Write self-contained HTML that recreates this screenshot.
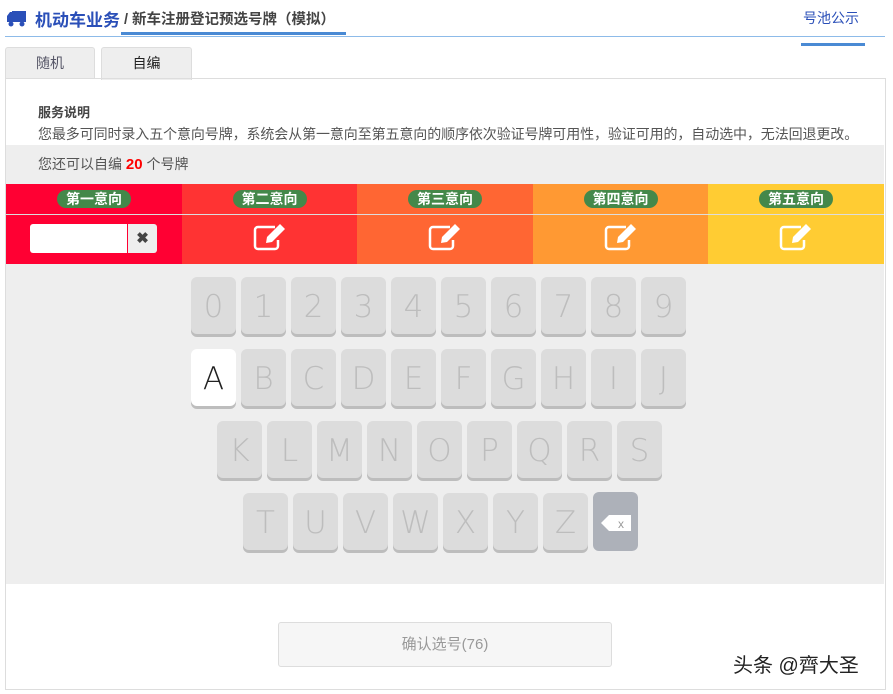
<!DOCTYPE html>
<html><head><meta charset="utf-8"><style>
body{margin:0;width:893px;height:694px;background:#fff;font-family:"Liberation Sans","Noto Sans CJK SC",sans-serif;position:relative;overflow:hidden}
.a{position:absolute}
.k{position:absolute;width:45px;height:57px;background:#dcdcdc;border-radius:6px;box-shadow:0 3px 0 #bdbdbd;color:#bdbdbd;font-size:31px;text-align:center;line-height:60px;font-family:"DejaVu Sans",sans-serif;font-weight:300}
.hd{position:absolute;top:184px;height:30px;border-bottom:1px solid #ddd;text-align:center}
.ed{position:absolute;top:215px;height:49px;text-align:center}
.pill{display:inline-block;margin-top:6px;background:#44884a;color:#fff;font-weight:bold;font-size:14px;line-height:18px;padding:0 9px;border-radius:9px}
.ic{margin-top:8px}
</style></head><body>
<svg class="a" style="left:6px;top:10px" width="22" height="17" viewBox="0 0 22 17"><path d="M6 1h14v11H6zM1 6l3-4h2v10H1z" fill="#2a4fb8"/><circle cx="5" cy="14" r="2.5" fill="#2a4fb8"/><circle cx="16" cy="14" r="2.5" fill="#2a4fb8"/></svg>
<div class="a" style="left:35px;top:6px;font-size:17px;color:#2a4fb8;font-weight:bold">机动车业务</div>
<div class="a" style="left:124px;top:8px;font-size:14.5px;color:#444;font-weight:bold">/ 新车注册登记预选号牌（模拟）</div>
<div class="a" style="left:121px;top:32px;width:225px;height:3px;background:#4a8ad4"></div>
<div class="a" style="left:803px;top:8px;font-size:14px;color:#2a4fb8">号池公示</div>
<div class="a" style="left:5px;top:36px;width:880px;height:1px;background:#8dbbe9"></div>
<div class="a" style="left:801px;top:43px;width:64px;height:3px;background:#4a8ad4"></div>
<div class="a" style="left:5px;top:47px;width:88px;height:31px;background:#eee;border:1px solid #ddd;border-bottom:none;border-radius:3px 3px 0 0;text-align:center;line-height:31px;font-size:14px;color:#556">随机</div>
<div class="a" style="left:101px;top:47px;width:89px;height:32px;background:#eee;border:1px solid #ddd;border-bottom:none;border-radius:3px 3px 0 0;text-align:center;line-height:31px;font-size:14px;color:#222">自编</div>
<div class="a" style="left:5px;top:78px;width:879px;height:610px;border:1px solid #ddd"></div>
<div class="a" style="left:38px;top:102px;font-size:13px;color:#444;font-weight:bold">服务说明</div>
<div class="a" style="left:38px;top:124px;font-size:14px;color:#555;white-space:nowrap;letter-spacing:-0.1px">您最多可同时录入五个意向号牌，系统会从第一意向至第五意向的顺序依次验证号牌可用性，验证可用的，自动选中，无法回退更改。</div>
<div class="a" style="left:6px;top:145px;width:878px;height:439px;background:#eee"></div>
<div class="a" style="left:38px;top:154px;font-size:14px;color:#555">您还可以自编 <b style="color:#f00;font-size:15px">20</b> 个号牌</div>
<div class="hd" style="left:6px;width:176px;background:#ff0033"><span class="pill">第一意向</span></div>
<div class="hd" style="left:182px;width:175px;background:#ff3333"><span class="pill">第二意向</span></div>
<div class="hd" style="left:357px;width:176px;background:#ff6633"><span class="pill">第三意向</span></div>
<div class="hd" style="left:533px;width:175px;background:#ff9933"><span class="pill">第四意向</span></div>
<div class="hd" style="left:708px;width:176px;background:#ffcc33"><span class="pill">第五意向</span></div>
<div class="ed" style="left:6px;width:176px;background:#ff0033">
<div class="a" style="left:24px;top:9px;width:97px;height:29px;background:#fff;border-radius:3px 0 0 3px"></div>
<div class="a" style="left:122px;top:9px;width:29px;height:29px;background:#eee;border-radius:0 3px 3px 0;line-height:29px;font-size:15px;font-weight:bold;color:#444">✖</div>
</div>
<div class="ed" style="left:182px;width:175px;background:#ff3333"><svg class="ic" width="34" height="28" viewBox="0 0 34 28"><path d="M22 4H5a3 3 0 0 0-3 3v16a3 3 0 0 0 3 3h17a3 3 0 0 0 3-3v-6" fill="none" stroke="#fff" stroke-width="2.5"/><path d="M27 1l5 5-13 13-6 1 1-6z" fill="#fff"/></svg></div>
<div class="ed" style="left:357px;width:176px;background:#ff6633"><svg class="ic" width="34" height="28" viewBox="0 0 34 28"><path d="M22 4H5a3 3 0 0 0-3 3v16a3 3 0 0 0 3 3h17a3 3 0 0 0 3-3v-6" fill="none" stroke="#fff" stroke-width="2.5"/><path d="M27 1l5 5-13 13-6 1 1-6z" fill="#fff"/></svg></div>
<div class="ed" style="left:533px;width:175px;background:#ff9933"><svg class="ic" width="34" height="28" viewBox="0 0 34 28"><path d="M22 4H5a3 3 0 0 0-3 3v16a3 3 0 0 0 3 3h17a3 3 0 0 0 3-3v-6" fill="none" stroke="#fff" stroke-width="2.5"/><path d="M27 1l5 5-13 13-6 1 1-6z" fill="#fff"/></svg></div>
<div class="ed" style="left:708px;width:176px;background:#ffcc33"><svg class="ic" width="34" height="28" viewBox="0 0 34 28"><path d="M22 4H5a3 3 0 0 0-3 3v16a3 3 0 0 0 3 3h17a3 3 0 0 0 3-3v-6" fill="none" stroke="#fff" stroke-width="2.5"/><path d="M27 1l5 5-13 13-6 1 1-6z" fill="#fff"/></svg></div>

<div class="k" style="left:191px;top:277px">0</div><div class="k" style="left:241px;top:277px">1</div><div class="k" style="left:291px;top:277px">2</div><div class="k" style="left:341px;top:277px">3</div><div class="k" style="left:391px;top:277px">4</div><div class="k" style="left:441px;top:277px">5</div><div class="k" style="left:491px;top:277px">6</div><div class="k" style="left:541px;top:277px">7</div><div class="k" style="left:591px;top:277px">8</div><div class="k" style="left:641px;top:277px">9</div>
<div class="k" style="left:191px;top:349px;background:#fff;color:#222">A</div><div class="k" style="left:241px;top:349px">B</div><div class="k" style="left:291px;top:349px">C</div><div class="k" style="left:341px;top:349px">D</div><div class="k" style="left:391px;top:349px">E</div><div class="k" style="left:441px;top:349px">F</div><div class="k" style="left:491px;top:349px">G</div><div class="k" style="left:541px;top:349px">H</div><div class="k" style="left:591px;top:349px">I</div><div class="k" style="left:641px;top:349px">J</div>
<div class="k" style="left:217px;top:421px">K</div><div class="k" style="left:267px;top:421px">L</div><div class="k" style="left:317px;top:421px">M</div><div class="k" style="left:367px;top:421px">N</div><div class="k" style="left:417px;top:421px">O</div><div class="k" style="left:467px;top:421px">P</div><div class="k" style="left:517px;top:421px">Q</div><div class="k" style="left:567px;top:421px">R</div><div class="k" style="left:617px;top:421px">S</div>
<div class="k" style="left:243px;top:493px">T</div><div class="k" style="left:293px;top:493px">U</div><div class="k" style="left:343px;top:493px">V</div><div class="k" style="left:393px;top:493px">W</div><div class="k" style="left:443px;top:493px">X</div><div class="k" style="left:493px;top:493px">Y</div><div class="k" style="left:543px;top:493px">Z</div>
<div class="k" style="left:593px;top:492px;height:59px;background:#adb1b9;box-shadow:none"><svg style="margin-top:20px" width="32" height="18" viewBox="0 0 32 18"><path d="M9 1h22v16H9L1 9z" fill="#fff"/><text x="21" y="14" font-size="12" fill="#999" text-anchor="middle" font-family="Liberation Sans">x</text></svg></div>

<div class="a" style="left:278px;top:622px;width:332px;height:43px;background:#f6f6f6;border:1px solid #ddd;border-radius:3px;text-align:center;line-height:43px;font-size:15px;color:#999">确认选号(76)</div>
<div class="a" style="left:733px;top:649px;font-size:20px;color:#222;white-space:nowrap">头条 @齊大圣</div>
</body></html>
